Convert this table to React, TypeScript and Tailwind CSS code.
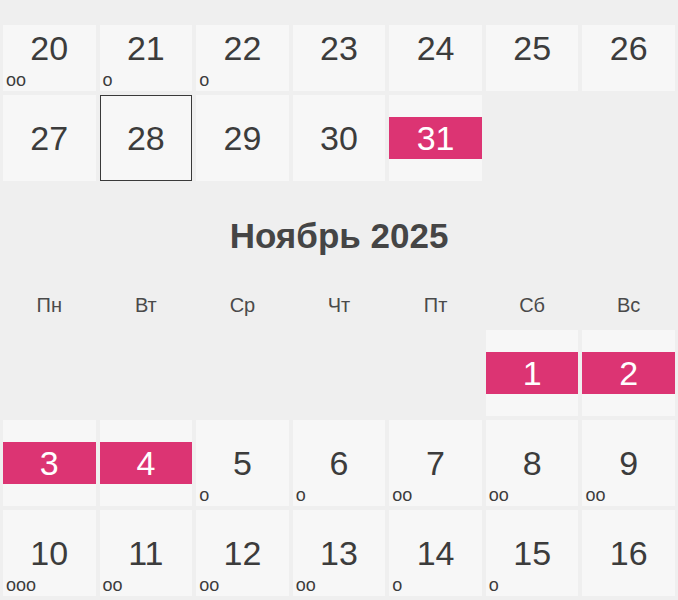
type Day = { n?: number; dots?: string; hl?: boolean; today?: boolean };

const octRows: Day[][] = [
  [{ n: 20, dots: 'oo' }, { n: 21, dots: 'o' }, { n: 22, dots: 'o' }, { n: 23 }, { n: 24 }, { n: 25 }, { n: 26 }],
  [{ n: 27 }, { n: 28, today: true }, { n: 29 }, { n: 30 }, { n: 31, hl: true }, {}, {}],
];

const novRows: Day[][] = [
  [{}, {}, {}, {}, {}, { n: 1, hl: true }, { n: 2, hl: true }],
  [{ n: 3, hl: true }, { n: 4, hl: true }, { n: 5, dots: 'o' }, { n: 6, dots: 'o' }, { n: 7, dots: 'oo' }, { n: 8, dots: 'oo' }, { n: 9, dots: 'oo' }],
  [{ n: 10, dots: 'ooo' }, { n: 11, dots: 'oo' }, { n: 12, dots: 'oo' }, { n: 13, dots: 'oo' }, { n: 14, dots: 'o' }, { n: 15, dots: 'o' }, { n: 16 }],
];

const weekdays = ['Пн', 'Вт', 'Ср', 'Чт', 'Пт', 'Сб', 'Вс'];

const Cell = ({ day }: { day: Day }) => {
  if (day.n === undefined) return <div className="h-[86px]" />;
  return (
    <div
      className={`relative h-[86px] bg-[#f7f7f7] flex items-center justify-center ${
        day.today ? 'border-[1.5px] border-[#3a3a3a]' : ''
      }`}
    >
      {day.hl ? (
        <div className="w-full h-[42px] bg-[#dc3473] flex items-center justify-center text-white text-[34px] leading-none">
          {day.n}
        </div>
      ) : (
        <span className="text-[#3c3c3c] text-[34px] leading-none">{day.n}</span>
      )}
      {day.dots && (
        <span className="absolute left-[3px] bottom-[2px] text-[18px] leading-none text-[#3c3c3c]">{day.dots}</span>
      )}
    </div>
  );
};

const Row = ({ days }: { days: Day[] }) => (
  <div className="grid grid-cols-7 gap-[4px]">
    {days.map((d, i) => (
      <Cell key={i} day={d} />
    ))}
  </div>
);

export default function App() {
  return (
    <div className="w-[678px] h-[600px] overflow-hidden bg-[#efefef] px-[3px] font-['Liberation_Sans',Arial,sans-serif]">
      <div className="h-[25px]" />
      <div className="h-[66px] overflow-hidden">
        <div className="-mt-[20px]">
          <Row days={octRows[0]} />
        </div>
      </div>
      <div className="mt-[4px]">
        <Row days={octRows[1]} />
      </div>

      <div className="mt-[35px] text-center text-[35px] leading-[40px] font-bold text-[#454545]">Ноябрь 2025</div>

      <div className="mt-[37px] grid grid-cols-7 gap-[4px]">
        {weekdays.map((w) => (
          <div key={w} className="text-center text-[20px] leading-[24px] text-[#4a4a4a]">
            {w}
          </div>
        ))}
      </div>

      <div className="mt-[13px] flex flex-col gap-[4px]">
        {novRows.map((r, i) => (
          <Row key={i} days={r} />
        ))}
      </div>
    </div>
  );
}
